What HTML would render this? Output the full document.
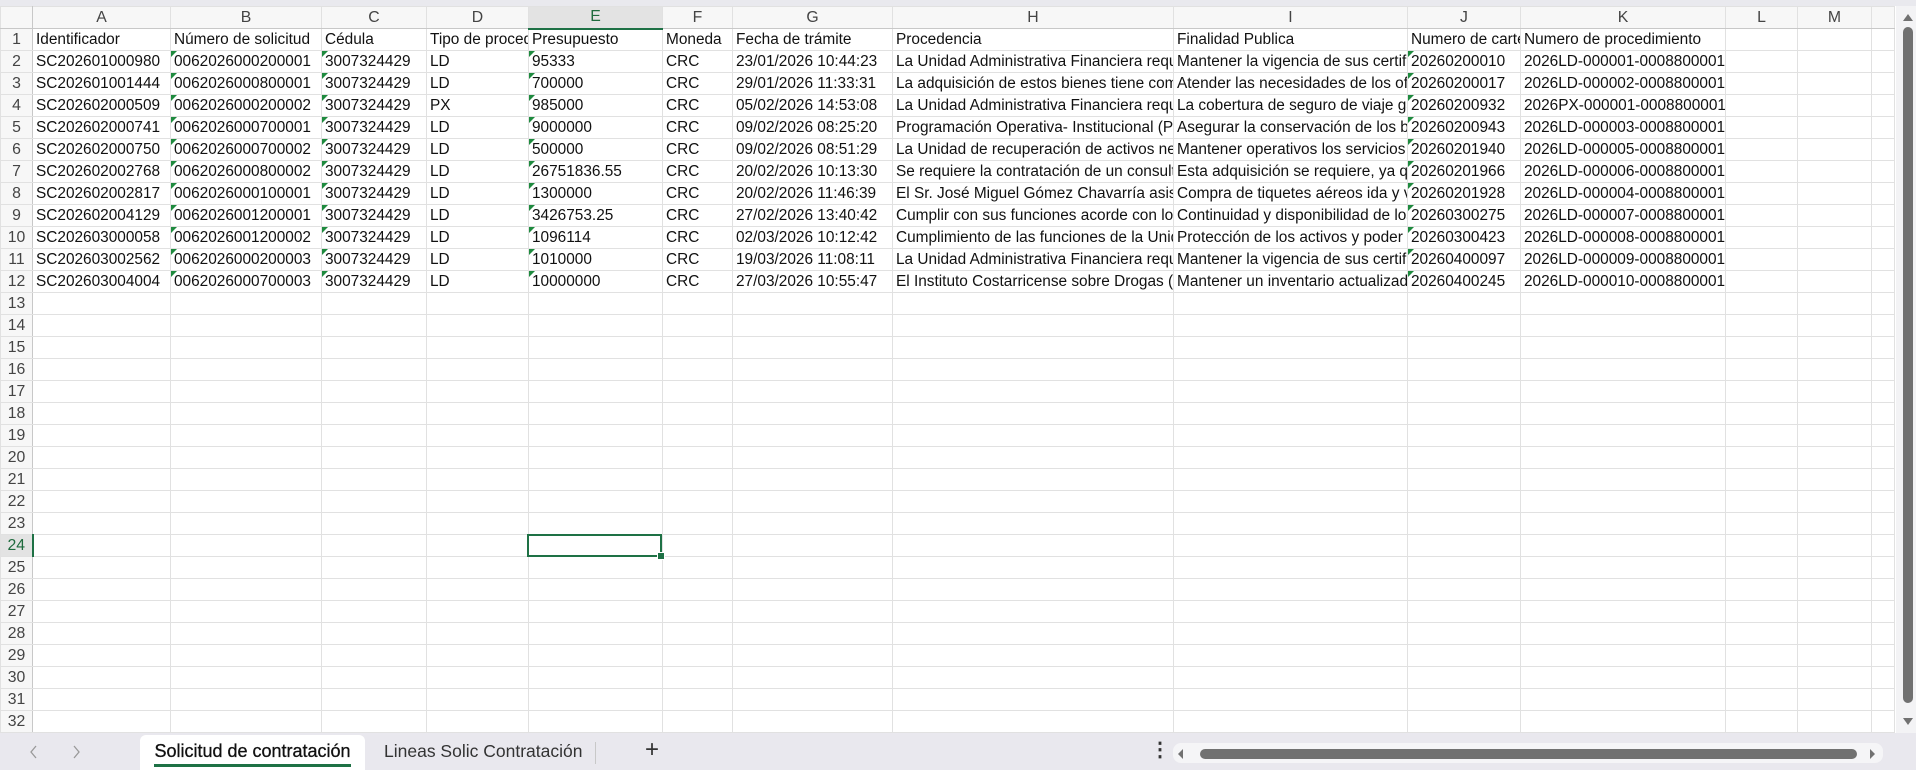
<!DOCTYPE html>
<html><head><meta charset="utf-8">
<style>
*{box-sizing:border-box;margin:0;padding:0}
body{width:1916px;height:770px;overflow:hidden;background:#fff;font-family:"Liberation Sans",sans-serif;position:relative}
.top{position:absolute;left:0;top:0;width:1916px;height:6px;background:#e9e9ee}
table{position:absolute;left:0;top:6px;border-collapse:collapse;table-layout:fixed;width:1894px}
td{height:22px;border:1px solid #e1e1e1;font-size:15.4px;color:#111;white-space:nowrap;overflow:hidden;padding:0 3px;line-height:20px;position:relative}
tr.h td{background:#f7f7f7;color:#444;text-align:center;border-bottom:1px solid #c8c8c8;font-size:15.8px}
td.r{background:#f7f7f7;color:#444;text-align:center;padding:0;border-right:1px solid #c8c8c8;font-size:15.8px}
tr.h td.sel{background:#e3e3e3;color:#1e6b3d;border-bottom:2px solid #1e7145}
td.rs{color:#1e6b3d;background:#e3e3e3!important;border-right:2px solid #1e7145!important}
.t::before{content:"";position:absolute;left:0;top:0;border-top:6px solid #1e8a3e;border-right:6px solid transparent}
.selbox{position:absolute;left:527px;top:534px;width:135px;height:23px;border:2px solid #1e7145}
.selbox::after{content:"";position:absolute;right:-5px;bottom:-5px;width:6px;height:6px;background:#1e7145;border:1px solid #fff}
.vs{position:absolute;left:1896px;top:6px;width:20px;height:727px;background:#f3f3f5}
.vthumb{position:absolute;left:1903px;top:27px;width:10px;height:676px;background:#717171;border-radius:5px}
.tabs{position:absolute;left:0;top:733px;width:1916px;height:37px;background:#e9e8ee}
.tab1{position:absolute;left:140px;top:2px;width:225px;height:35px;background:#fff;border-radius:6px 6px 0 0;text-align:center;font-size:18px;line-height:32px;color:#111;-webkit-text-stroke:0.3px #111}
.tab1 span{border-bottom:3px solid #1e7145;padding-bottom:3px}
.tab2{position:absolute;left:384px;top:2px;font-size:17.5px;line-height:32px;color:#333}
.sep{position:absolute;left:595px;top:9px;width:1px;height:22px;background:#c8c8c8}
.htrack{position:absolute;left:1173px;top:743px;width:710px;height:20px;background:#f5f5f7;border-radius:8px}
.hthumb{position:absolute;left:1200px;top:749px;width:657px;height:10px;background:#717171;border-radius:5px}
</style></head><body>
<div class="top"></div>
<table>
<colgroup><col style="width:32px"><col style="width:138px"><col style="width:151px"><col style="width:105px"><col style="width:102px"><col style="width:134px"><col style="width:70px"><col style="width:160px"><col style="width:281px"><col style="width:234px"><col style="width:113px"><col style="width:205px"><col style="width:72px"><col style="width:74px"><col style="width:23px"></colgroup>
<tr class="h"><td class="r"></td><td>A</td><td>B</td><td>C</td><td>D</td><td class="sel">E</td><td>F</td><td>G</td><td>H</td><td>I</td><td>J</td><td>K</td><td>L</td><td>M</td><td></td></tr>
<tr><td class="r">1</td><td>Identificador</td><td>Número de solicitud</td><td>Cédula</td><td>Tipo de procedimiento</td><td>Presupuesto</td><td>Moneda</td><td>Fecha de trámite</td><td>Procedencia</td><td>Finalidad Publica</td><td>Numero de cartel</td><td>Numero de procedimiento</td><td></td><td></td><td></td></tr>
<tr><td class="r">2</td><td>SC202601000980</td><td class="t">0062026000200001</td><td class="t">3007324429</td><td>LD</td><td class="t">95333</td><td>CRC</td><td>23/01/2026 10:44:23</td><td>La Unidad Administrativa Financiera requiere</td><td>Mantener la vigencia de sus certificados</td><td class="t">20260200010</td><td>2026LD-000001-0008800001</td><td></td><td></td><td></td></tr>
<tr><td class="r">3</td><td>SC202601001444</td><td class="t">0062026000800001</td><td class="t">3007324429</td><td>LD</td><td class="t">700000</td><td>CRC</td><td>29/01/2026 11:33:31</td><td>La adquisición de estos bienes tiene como</td><td>Atender las necesidades de los oficiales</td><td class="t">20260200017</td><td>2026LD-000002-0008800001</td><td></td><td></td><td></td></tr>
<tr><td class="r">4</td><td>SC202602000509</td><td class="t">0062026000200002</td><td class="t">3007324429</td><td>PX</td><td class="t">985000</td><td>CRC</td><td>05/02/2026 14:53:08</td><td>La Unidad Administrativa Financiera requiere</td><td>La cobertura de seguro de viaje garantiza</td><td class="t">20260200932</td><td>2026PX-000001-0008800001</td><td></td><td></td><td></td></tr>
<tr><td class="r">5</td><td>SC202602000741</td><td class="t">0062026000700001</td><td class="t">3007324429</td><td>LD</td><td class="t">9000000</td><td>CRC</td><td>09/02/2026 08:25:20</td><td>Programación Operativa- Institucional (POI)</td><td>Asegurar la conservación de los bienes</td><td class="t">20260200943</td><td>2026LD-000003-0008800001</td><td></td><td></td><td></td></tr>
<tr><td class="r">6</td><td>SC202602000750</td><td class="t">0062026000700002</td><td class="t">3007324429</td><td>LD</td><td class="t">500000</td><td>CRC</td><td>09/02/2026 08:51:29</td><td>La Unidad de recuperación de activos necesita</td><td>Mantener operativos los servicios</td><td class="t">20260201940</td><td>2026LD-000005-0008800001</td><td></td><td></td><td></td></tr>
<tr><td class="r">7</td><td>SC202602002768</td><td class="t">0062026000800002</td><td class="t">3007324429</td><td>LD</td><td class="t">26751836.55</td><td>CRC</td><td>20/02/2026 10:13:30</td><td>Se requiere la contratación de un consultor</td><td>Esta adquisición se requiere, ya que</td><td class="t">20260201966</td><td>2026LD-000006-0008800001</td><td></td><td></td><td></td></tr>
<tr><td class="r">8</td><td>SC202602002817</td><td class="t">0062026000100001</td><td class="t">3007324429</td><td>LD</td><td class="t">1300000</td><td>CRC</td><td>20/02/2026 11:46:39</td><td>El Sr. José Miguel Gómez Chavarría asistirá</td><td>Compra de tiquetes aéreos ida y vuelta</td><td class="t">20260201928</td><td>2026LD-000004-0008800001</td><td></td><td></td><td></td></tr>
<tr><td class="r">9</td><td>SC202602004129</td><td class="t">0062026001200001</td><td class="t">3007324429</td><td>LD</td><td class="t">3426753.25</td><td>CRC</td><td>27/02/2026 13:40:42</td><td>Cumplir con sus funciones acorde con lo</td><td>Continuidad y disponibilidad de los</td><td class="t">20260300275</td><td>2026LD-000007-0008800001</td><td></td><td></td><td></td></tr>
<tr><td class="r">10</td><td>SC202603000058</td><td class="t">0062026001200002</td><td class="t">3007324429</td><td>LD</td><td class="t">1096114</td><td>CRC</td><td>02/03/2026 10:12:42</td><td>Cumplimiento de las funciones de la Unidad</td><td>Protección de los activos y poder</td><td class="t">20260300423</td><td>2026LD-000008-0008800001</td><td></td><td></td><td></td></tr>
<tr><td class="r">11</td><td>SC202603002562</td><td class="t">0062026000200003</td><td class="t">3007324429</td><td>LD</td><td class="t">1010000</td><td>CRC</td><td>19/03/2026 11:08:11</td><td>La Unidad Administrativa Financiera requiere</td><td>Mantener la vigencia de sus certificados</td><td class="t">20260400097</td><td>2026LD-000009-0008800001</td><td></td><td></td><td></td></tr>
<tr><td class="r">12</td><td>SC202603004004</td><td class="t">0062026000700003</td><td class="t">3007324429</td><td>LD</td><td class="t">10000000</td><td>CRC</td><td>27/03/2026 10:55:47</td><td>El Instituto Costarricense sobre Drogas (ICD)</td><td>Mantener un inventario actualizado</td><td class="t">20260400245</td><td>2026LD-000010-0008800001</td><td></td><td></td><td></td></tr>
<tr><td class="r">13</td><td></td><td></td><td></td><td></td><td></td><td></td><td></td><td></td><td></td><td></td><td></td><td></td><td></td><td></td></tr>
<tr><td class="r">14</td><td></td><td></td><td></td><td></td><td></td><td></td><td></td><td></td><td></td><td></td><td></td><td></td><td></td><td></td></tr>
<tr><td class="r">15</td><td></td><td></td><td></td><td></td><td></td><td></td><td></td><td></td><td></td><td></td><td></td><td></td><td></td><td></td></tr>
<tr><td class="r">16</td><td></td><td></td><td></td><td></td><td></td><td></td><td></td><td></td><td></td><td></td><td></td><td></td><td></td><td></td></tr>
<tr><td class="r">17</td><td></td><td></td><td></td><td></td><td></td><td></td><td></td><td></td><td></td><td></td><td></td><td></td><td></td><td></td></tr>
<tr><td class="r">18</td><td></td><td></td><td></td><td></td><td></td><td></td><td></td><td></td><td></td><td></td><td></td><td></td><td></td><td></td></tr>
<tr><td class="r">19</td><td></td><td></td><td></td><td></td><td></td><td></td><td></td><td></td><td></td><td></td><td></td><td></td><td></td><td></td></tr>
<tr><td class="r">20</td><td></td><td></td><td></td><td></td><td></td><td></td><td></td><td></td><td></td><td></td><td></td><td></td><td></td><td></td></tr>
<tr><td class="r">21</td><td></td><td></td><td></td><td></td><td></td><td></td><td></td><td></td><td></td><td></td><td></td><td></td><td></td><td></td></tr>
<tr><td class="r">22</td><td></td><td></td><td></td><td></td><td></td><td></td><td></td><td></td><td></td><td></td><td></td><td></td><td></td><td></td></tr>
<tr><td class="r">23</td><td></td><td></td><td></td><td></td><td></td><td></td><td></td><td></td><td></td><td></td><td></td><td></td><td></td><td></td></tr>
<tr><td class="r rs">24</td><td></td><td></td><td></td><td></td><td></td><td></td><td></td><td></td><td></td><td></td><td></td><td></td><td></td><td></td></tr>
<tr><td class="r">25</td><td></td><td></td><td></td><td></td><td></td><td></td><td></td><td></td><td></td><td></td><td></td><td></td><td></td><td></td></tr>
<tr><td class="r">26</td><td></td><td></td><td></td><td></td><td></td><td></td><td></td><td></td><td></td><td></td><td></td><td></td><td></td><td></td></tr>
<tr><td class="r">27</td><td></td><td></td><td></td><td></td><td></td><td></td><td></td><td></td><td></td><td></td><td></td><td></td><td></td><td></td></tr>
<tr><td class="r">28</td><td></td><td></td><td></td><td></td><td></td><td></td><td></td><td></td><td></td><td></td><td></td><td></td><td></td><td></td></tr>
<tr><td class="r">29</td><td></td><td></td><td></td><td></td><td></td><td></td><td></td><td></td><td></td><td></td><td></td><td></td><td></td><td></td></tr>
<tr><td class="r">30</td><td></td><td></td><td></td><td></td><td></td><td></td><td></td><td></td><td></td><td></td><td></td><td></td><td></td><td></td></tr>
<tr><td class="r">31</td><td></td><td></td><td></td><td></td><td></td><td></td><td></td><td></td><td></td><td></td><td></td><td></td><td></td><td></td></tr>
<tr><td class="r">32</td><td></td><td></td><td></td><td></td><td></td><td></td><td></td><td></td><td></td><td></td><td></td><td></td><td></td><td></td></tr>
<tr><td class="r">33</td><td></td><td></td><td></td><td></td><td></td><td></td><td></td><td></td><td></td><td></td><td></td><td></td><td></td><td></td></tr>
</table>
<div class="selbox"></div>
<div class="vs"></div>
<div class="vthumb"></div>
<svg style="position:absolute;left:1902px;top:12px" width="12" height="10"><path d="M1 9 L6 2 L11 9Z" fill="#717171"/></svg>
<svg style="position:absolute;left:1902px;top:717px" width="12" height="10"><path d="M1 1 L6 8 L11 1Z" fill="#717171"/></svg>
<div class="tabs">
<svg style="position:absolute;left:28px;top:11px" width="12" height="16"><path d="M8 2 L3 8 L8 14" fill="none" stroke="#999" stroke-width="1.3"/></svg>
<svg style="position:absolute;left:70px;top:11px" width="12" height="16"><path d="M4 2 L9 8 L4 14" fill="none" stroke="#999" stroke-width="1.3"/></svg>
<div class="tab1"><span>Solicitud de contratación</span></div>
<div class="tab2">Lineas Solic Contratación</div>
<div class="sep"></div>
<div style="position:absolute;left:645px;top:1px;font-size:24px;line-height:32px;color:#333">+</div>
<div style="position:absolute;left:1150px;top:1px;font-size:20px;line-height:32px;color:#333;font-weight:bold">⋮</div>
</div>
<div class="htrack"></div>
<div class="hthumb"></div>
<svg style="position:absolute;left:1175px;top:747px" width="10" height="14"><path d="M8 2 L3 7 L8 12Z" fill="#717171"/></svg>
<svg style="position:absolute;left:1868px;top:747px" width="10" height="14"><path d="M2 2 L7 7 L2 12Z" fill="#717171"/></svg>
</body></html>
